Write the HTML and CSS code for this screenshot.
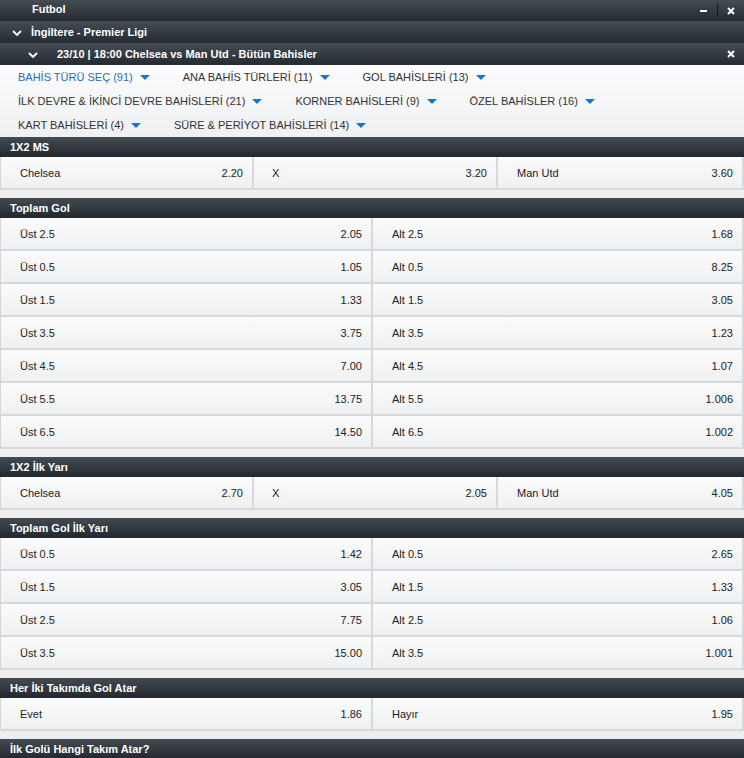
FILE: index.html
```html
<!DOCTYPE html>
<html lang="tr">
<head>
<meta charset="utf-8">
<title>Futbol</title>
<link rel="stylesheet" href="styles.css">
</head>
<body>
<div class="panel">
  <div class="bar bar-sport">
    <span class="bar-title">Futbol</span>
    <span class="bar-tools">
      <span class="icon-min"></span>
      <span class="tool-sep"></span>
      <svg class="icon-x" viewBox="0 0 8 8" width="8" height="8"><path d="M1 1 L7 7 M7 1 L1 7" stroke="#fff" stroke-width="2" fill="none"/></svg>
    </span>
  </div>
  <div class="bar bar-league">
    <svg class="chev" viewBox="0 0 10 6" width="10" height="6"><path d="M1 1 L5 5 L9 1" stroke="#fff" stroke-width="1.8" fill="none"/></svg>
    <span class="bar-title">İngiltere - Premier Ligi</span>
  </div>
  <div class="bar bar-event">
    <svg class="chev" viewBox="0 0 10 6" width="10" height="6"><path d="M1 1 L5 5 L9 1" stroke="#fff" stroke-width="1.8" fill="none"/></svg>
    <span class="bar-title">23/10 | 18:00 Chelsea vs Man Utd - Bütün Bahisler</span>
    <svg class="icon-x icon-x-event" viewBox="0 0 8 8" width="8" height="8"><path d="M1 1 L7 7 M7 1 L1 7" stroke="#fff" stroke-width="2" fill="none"/></svg>
  </div>

  <div class="filters">
    <div class="filter-row">
      <span class="filter active">BAHİS TÜRÜ SEÇ (91)<i class="caret"></i></span>
      <span class="filter">ANA BAHİS TÜRLERİ (11)<i class="caret"></i></span>
      <span class="filter">GOL BAHİSLERİ (13)<i class="caret"></i></span>
    </div>
    <div class="filter-row">
      <span class="filter">İLK DEVRE &amp; İKİNCİ DEVRE BAHİSLERİ (21)<i class="caret"></i></span>
      <span class="filter">KORNER BAHİSLERİ (9)<i class="caret"></i></span>
      <span class="filter">ÖZEL BAHİSLER (16)<i class="caret"></i></span>
    </div>
    <div class="filter-row">
      <span class="filter">KART BAHİSLERİ (4)<i class="caret"></i></span>
      <span class="filter">SÜRE &amp; PERİYOT BAHİSLERİ (14)<i class="caret"></i></span>
    </div>
  </div>

  <section class="market">
    <h2 class="market-head">1X2 MS</h2>
    <div class="odds odds-3">
      <div class="cell"><span class="lbl">Chelsea</span><span class="val">2.20</span></div>
      <div class="cell"><span class="lbl">X</span><span class="val">3.20</span></div>
      <div class="cell"><span class="lbl">Man Utd</span><span class="val">3.60</span></div>
    </div>
  </section>

  <section class="market">
    <h2 class="market-head">Toplam Gol</h2>
    <div class="odds odds-2">
      <div class="cell"><span class="lbl">Üst 2.5</span><span class="val">2.05</span></div>
      <div class="cell"><span class="lbl">Alt 2.5</span><span class="val">1.68</span></div>
      <div class="cell"><span class="lbl">Üst 0.5</span><span class="val">1.05</span></div>
      <div class="cell"><span class="lbl">Alt 0.5</span><span class="val">8.25</span></div>
      <div class="cell"><span class="lbl">Üst 1.5</span><span class="val">1.33</span></div>
      <div class="cell"><span class="lbl">Alt 1.5</span><span class="val">3.05</span></div>
      <div class="cell"><span class="lbl">Üst 3.5</span><span class="val">3.75</span></div>
      <div class="cell"><span class="lbl">Alt 3.5</span><span class="val">1.23</span></div>
      <div class="cell"><span class="lbl">Üst 4.5</span><span class="val">7.00</span></div>
      <div class="cell"><span class="lbl">Alt 4.5</span><span class="val">1.07</span></div>
      <div class="cell"><span class="lbl">Üst 5.5</span><span class="val">13.75</span></div>
      <div class="cell"><span class="lbl">Alt 5.5</span><span class="val">1.006</span></div>
      <div class="cell"><span class="lbl">Üst 6.5</span><span class="val">14.50</span></div>
      <div class="cell"><span class="lbl">Alt 6.5</span><span class="val">1.002</span></div>
    </div>
  </section>

  <section class="market">
    <h2 class="market-head">1X2 İlk Yarı</h2>
    <div class="odds odds-3">
      <div class="cell"><span class="lbl">Chelsea</span><span class="val">2.70</span></div>
      <div class="cell"><span class="lbl">X</span><span class="val">2.05</span></div>
      <div class="cell"><span class="lbl">Man Utd</span><span class="val">4.05</span></div>
    </div>
  </section>

  <section class="market">
    <h2 class="market-head">Toplam Gol İlk Yarı</h2>
    <div class="odds odds-2">
      <div class="cell"><span class="lbl">Üst 0.5</span><span class="val">1.42</span></div>
      <div class="cell"><span class="lbl">Alt 0.5</span><span class="val">2.65</span></div>
      <div class="cell"><span class="lbl">Üst 1.5</span><span class="val">3.05</span></div>
      <div class="cell"><span class="lbl">Alt 1.5</span><span class="val">1.33</span></div>
      <div class="cell"><span class="lbl">Üst 2.5</span><span class="val">7.75</span></div>
      <div class="cell"><span class="lbl">Alt 2.5</span><span class="val">1.06</span></div>
      <div class="cell"><span class="lbl">Üst 3.5</span><span class="val">15.00</span></div>
      <div class="cell"><span class="lbl">Alt 3.5</span><span class="val">1.001</span></div>
    </div>
  </section>

  <section class="market">
    <h2 class="market-head">Her İki Takımda Gol Atar</h2>
    <div class="odds odds-2">
      <div class="cell"><span class="lbl">Evet</span><span class="val">1.86</span></div>
      <div class="cell"><span class="lbl">Hayır</span><span class="val">1.95</span></div>
    </div>
  </section>

  <section class="market">
    <h2 class="market-head">İlk Golü Hangi Takım Atar?</h2>
  </section>
</div>
</body>
</html>
```
FILE: styles.css
```css
html, body {
  margin: 0;
  padding: 0;
}
body {
  background: #edeff0;
  font-family: "Liberation Sans", Arial, sans-serif;
  font-size: 11px;
  color: #222;
  overflow: hidden;
}
.panel {
  width: 744px;
}

/* dark bars */
.bar {
  display: flex;
  align-items: center;
  color: #fff;
  font-weight: bold;
  background: linear-gradient(#444d54, #242a30);
  box-sizing: border-box;
}
.bar-sport {
  height: 21px;
  padding: 0 9px 3px 32px;
}
.bar-league {
  height: 22px;
  padding-left: 12px;
}
.bar-event {
  height: 22px;
  padding: 0 9px 0 28px;
}
.bar-title {
  flex: 1;
  white-space: nowrap;
}
.chev {
  flex: none;
}
.bar-league .chev {
  margin: 1px 9px 0 0;
}
.bar-event .chev {
  margin: 1px 19px 0 0;
}
.bar-tools {
  display: flex;
  align-items: center;
}
.icon-min {
  display: block;
  width: 7px;
  height: 2px;
  background: #fff;
  margin-top: 3px;
}
.tool-sep {
  display: block;
  width: 1px;
  height: 15px;
  background: #15191d;
  margin: 3px 9px 0 10px;
}
.icon-x {
  display: block;
  flex: none;
  margin-top: 3px;
}
.icon-x-event {
  margin-top: 0;
}

/* filter panel */
.filters {
  background: linear-gradient(#fcfcfd, #eef0f2);
  padding-left: 18px;
}
.filter-row {
  display: flex;
  height: 24px;
  align-items: center;
}
.filter {
  color: #333;
  margin-right: 33px;
  white-space: nowrap;
  display: inline-flex;
  align-items: center;
}
.filter.active {
  color: #2a6db8;
}
.caret {
  display: inline-block;
  width: 0;
  height: 0;
  border-left: 5px solid transparent;
  border-right: 5px solid transparent;
  border-top: 5px solid #1b74cc;
  margin-left: 7px;
  margin-top: 1px;
}

/* markets */
.market {
  margin-bottom: 8px;
}
.market-head {
  margin: 0;
  height: 20px;
  line-height: 20px;
  padding-left: 10px;
  font-size: 11px;
  font-weight: bold;
  color: #fff;
  background: linear-gradient(#434c53, #22282d);
}
.odds {
  display: grid;
  border-left: 1px solid #d3d6d8;
}
.odds-3 {
  grid-template-columns: 253px 244px 1fr;
}
.odds-2 {
  grid-template-columns: 372px 1fr;
}
.cell {
  display: flex;
  justify-content: space-between;
  align-items: center;
  box-sizing: border-box;
  height: 33px;
  padding: 0 9px 0 19px;
  background: linear-gradient(#fbfbfb, #eff0f1);
  border-right: 2px solid #d6d9db;
  border-bottom: 2px solid #d6d9db;
}
.odds-3 .cell:nth-child(2) {
  padding-left: 18px;
}
.lbl, .val {
  color: #222;
  white-space: nowrap;
}
```
